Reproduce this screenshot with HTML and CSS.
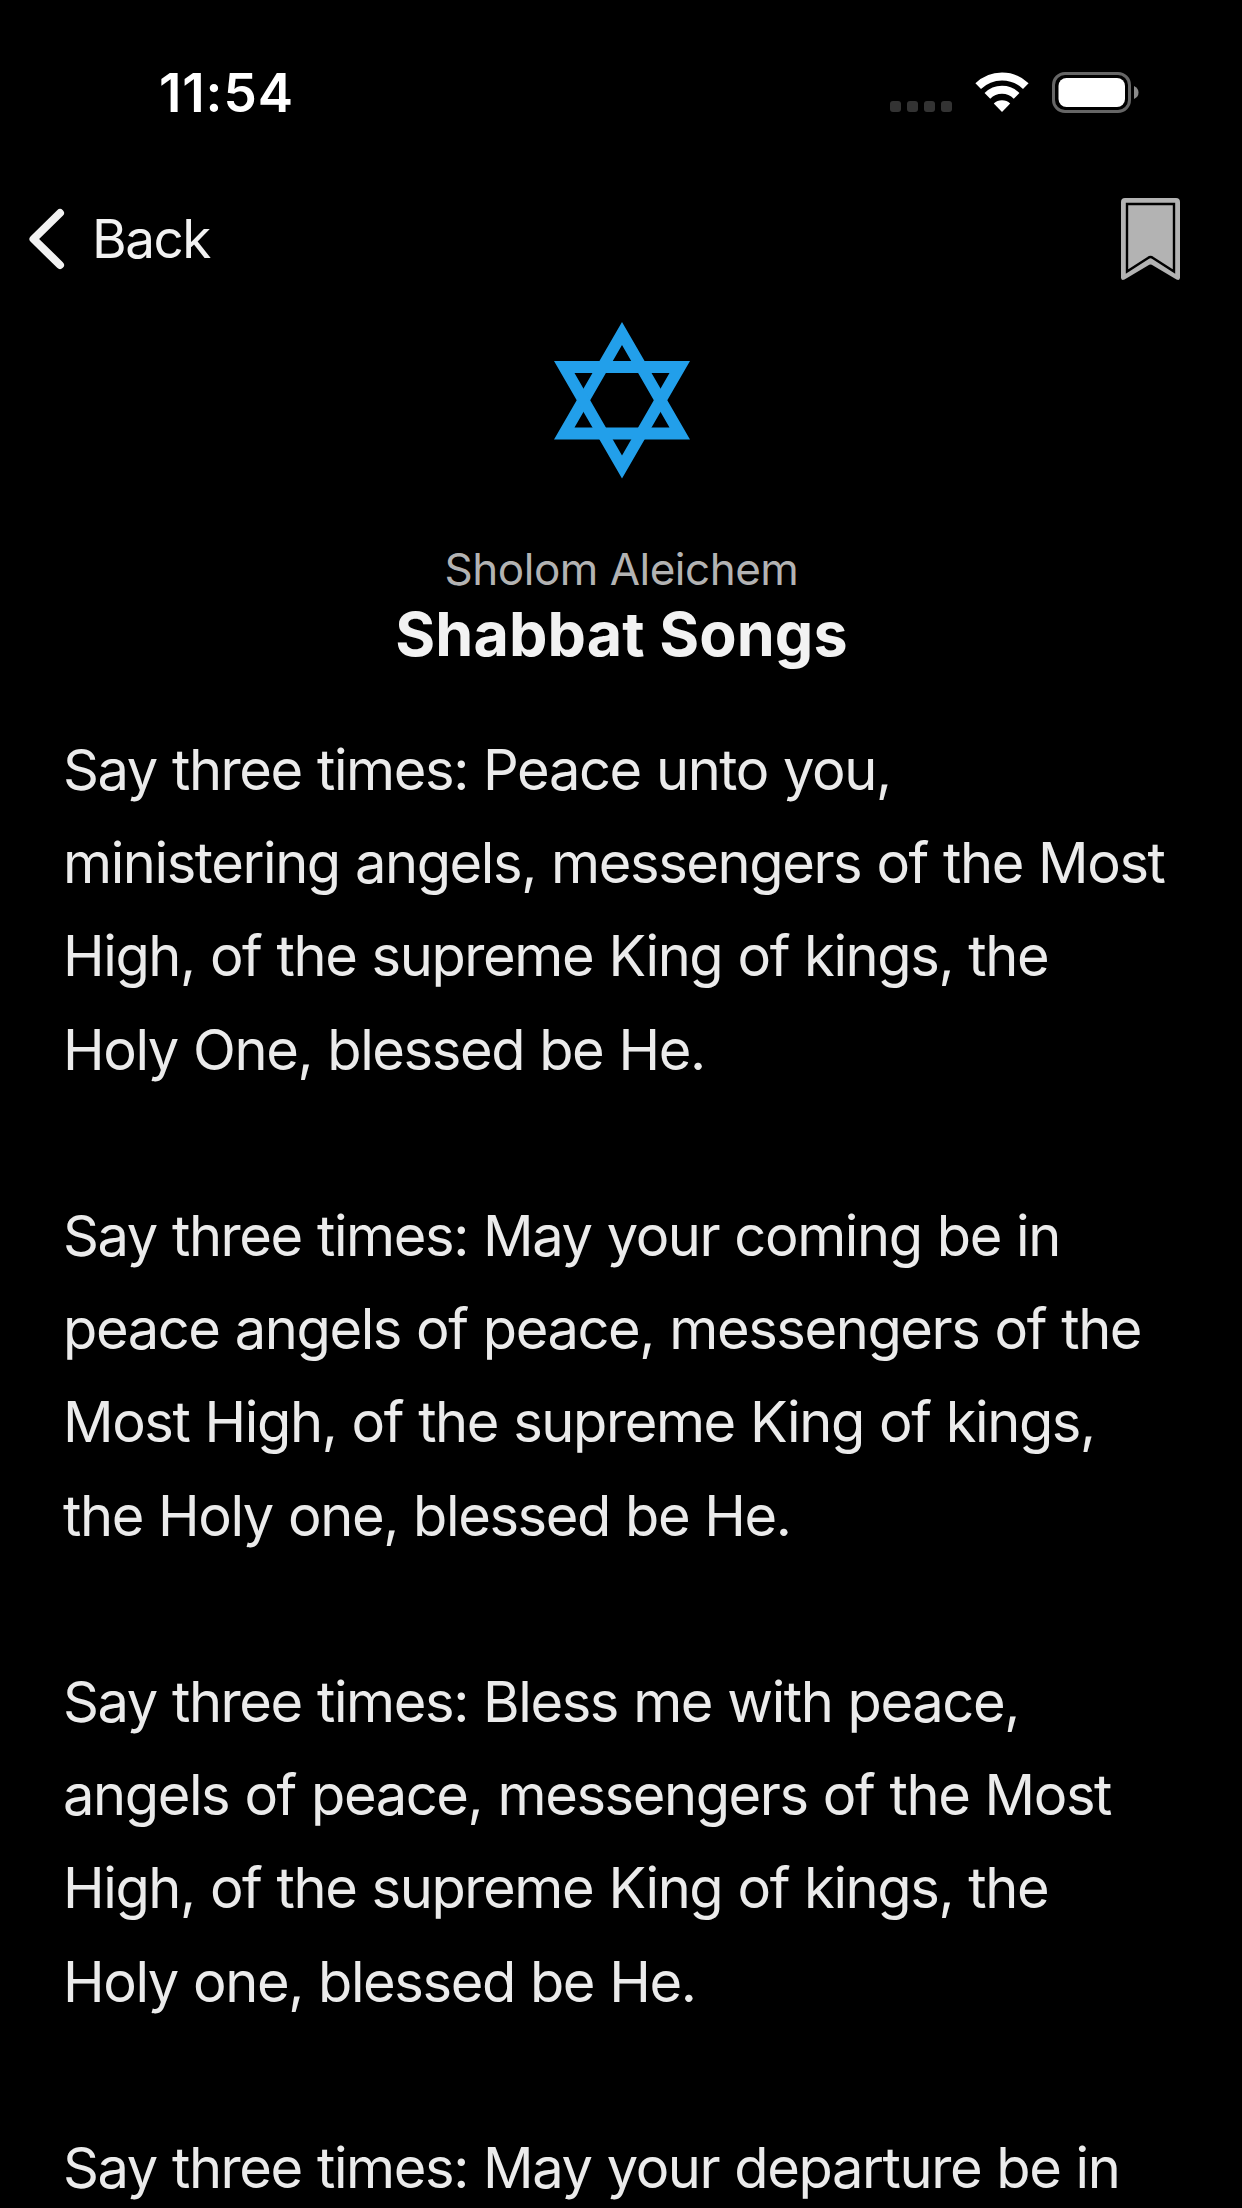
FILE: index.html
```
<!DOCTYPE html>
<html lang="en">
<head>
    <meta charset="UTF-8">
    <title>Shabbat Songs</title>
    <meta name="viewport" content="width=device-width, initial-scale=1.0">
    <link rel="stylesheet" href="styles.css">
</head>
<body>
<!-- Status bar -->
<div class="status-bar">
    <span class="time">11:54</span>
    <div class="status-icons">
        <div class="signal"><i></i><i></i><i></i><i></i></div>
        <svg class="wifi" viewBox="0 0 54 40" fill="none" stroke="#fff">
            <path d="M3.2 14.2A34 34 0 0 1 50.8 14.2" stroke-width="8"/>
            <path d="M12.4 23.9A20.6 20.6 0 0 1 41.6 23.9" stroke-width="8"/>
            <path d="M27 40L18.8 31.5A12 12 0 0 1 35.2 31.5Z" fill="#fff" stroke="none"/>
        </svg>
        <svg class="battery" viewBox="0 0 88 42">
            <rect x="1.5" y="1.5" width="76" height="38" rx="11.5" fill="none" stroke="#666" stroke-width="3"/>
            <rect x="6.5" y="6" width="66.5" height="29" rx="8" fill="#fff"/>
            <path d="M82 14Q86.5 16 86.5 20.5T82 27Z" fill="#8a8a8a"/>
        </svg>
    </div>
</div>

<!-- Navigation -->
<nav>
    <a class="back">
        <svg viewBox="0 0 36 62">
            <path d="M31 5L4.5 31L31 57" fill="none" stroke="#f2f2f2" stroke-width="8" stroke-linecap="round" stroke-linejoin="round"/>
        </svg>
        <span>Back</span>
    </a>
    <svg class="bookmark" viewBox="0 0 59 82">
        <path d="M4 0H55Q59 0 59 4V79.500Q59 83 55.500 81.500L32 67.500Q29.500 65.500 27 67.500L3.500 81.500Q0 83 0 79.500V4Q0 0 4 0Z" fill="#b3b3b3"/>
        <path d="M6 6H53V73.500L32 60Q29.500 58 27 60L6 73.500Z" fill="#b3b3b3" stroke="#000" stroke-width="2.400"/>
    </svg>
</nav>

<header>
    <svg class="star" viewBox="0 0 136 158" fill="#229fea" fill-rule="evenodd">
        <path d="M68 0L136 117.500H0ZM68 23L20.500 105.500H115.500Z"/>
        <path d="M68 156.500L0 39H136ZM68 133.500L115.500 51H20.500Z"/>
    </svg>
    <p class="subtitle">Sholom Aleichem</p>
    <h1>Shabbat Songs</h1>
</header>

<main>
    <p>Say three times: Peace unto you,<br>
        ministering angels, messengers of the Most<br>
        High, of the supreme King of kings, the<br>
        Holy One, blessed be He.</p>
    <p>Say three times: May your coming be in<br>
        peace angels of peace, messengers of the<br>
        Most High, of the supreme King of kings,<br>
        the Holy one, blessed be He.</p>
    <p>Say three times: Bless me with peace,<br>
        angels of peace, messengers of the Most<br>
        High, of the supreme King of kings, the<br>
        Holy one, blessed be He.</p>
    <p>Say three times: May your departure be in</p>
</main>
</body>
</html>
```
FILE: styles.css
```
* {
    box-sizing: border-box;
}

body {
    margin: 0;
    height: 2208px;
    overflow: hidden;
    background: #000;
    color: #f2f2f2;
    font-family: Inter, "Liberation Sans", sans-serif;
}

.status-bar {
    display: flex;
    justify-content: space-between;
    height: 186px;
    padding: 72px 102px 0 159px;
}

.time {
    font-size: 53px;
    font-weight: 600;
    line-height: 42px;
    letter-spacing: 0.9px;
    color: #fff;
}

.status-icons {
    display: flex;
    align-items: flex-start;
}

.signal {
    display: flex;
    gap: 6px;
    margin: 29px 23px 0 0;
}

.signal i {
    width: 11px;
    height: 11px;
    border-radius: 3px;
    background: #333;
}

.wifi {
    width: 54px;
    height: 40px;
    margin-right: 23px;
}

.battery {
    width: 88px;
    height: 42px;
}

nav {
    display: flex;
    justify-content: space-between;
    align-items: flex-start;
    height: 136px;
    padding: 12px 62px 0 29px;
}

.back {
    display: flex;
    gap: 27px;
    padding-top: 10px;
    font-size: 53px;
    line-height: 62px;
    letter-spacing: -1.5px;
}

.back svg {
    width: 36px;
    height: 62px;
}

.bookmark {
    width: 59px;
    height: 82px;
}

header {
    display: flex;
    flex-direction: column;
    align-items: center;
    padding-left: 1px;
}

.star {
    width: 136px;
    height: 158px;
}

.subtitle {
    margin: 62px 0 0;
    font-size: 44px;
    line-height: 54px;
    letter-spacing: -0.5px;
    color: #b3b3b3;
}

h1 {
    margin: 0;
    font-size: 61px;
    font-weight: 700;
    line-height: 76px;
    letter-spacing: 0.1px;
}

main {
    padding: 52px 0 0 63px;
    font-size: 56px;
    line-height: 93.2px;
    letter-spacing: -1.4px;
    word-spacing: 0.8px;
    color: #ebebeb;
    white-space: nowrap;
}

main p {
    margin: 0 0 93.2px;
}
```
